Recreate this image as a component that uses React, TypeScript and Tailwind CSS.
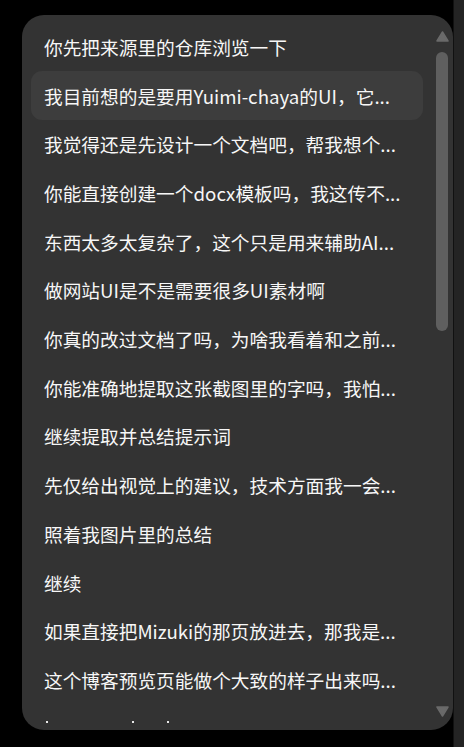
import React from "react";

const items = [
  "你先把来源里的仓库浏览一下",
  "我目前想的是要用Yuimi-chaya的UI，它...",
  "我觉得还是先设计一个文档吧，帮我想个...",
  "你能直接创建一个docx模板吗，我这传不...",
  "东西太多太复杂了，这个只是用来辅助AI...",
  "做网站UI是不是需要很多UI素材啊",
  "你真的改过文档了吗，为啥我看着和之前...",
  "你能准确地提取这张截图里的字吗，我怕...",
  "继续提取并总结提示词",
  "先仅给出视觉上的建议，技术方面我一会...",
  "照着我图片里的总结",
  "继续",
  "如果直接把Mizuki的那页放进去，那我是...",
  "这个博客预览页能做个大致的样子出来吗...",
];

const ArrowUp = () => (
  <svg width="13" height="11" viewBox="0 0 13 11" className="block">
    <path d="M6.5 1 L12 10 L1 10 Z" fill="#6a6a6a" stroke="#6a6a6a" strokeWidth="1.5" strokeLinejoin="round" />
  </svg>
);

const ArrowDown = () => (
  <svg width="13" height="11" viewBox="0 0 13 11" className="block">
    <path d="M1 1 L12 1 L6.5 10 Z" fill="#6a6a6a" stroke="#6a6a6a" strokeWidth="1.5" strokeLinejoin="round" />
  </svg>
);

export default function App() {
  const active = 1;

  return (
    <div
      className="flex h-[747px] w-[464px] bg-black overflow-hidden"
      style={{ fontFamily: '"Noto Sans CJK SC", "Noto Sans", sans-serif' }}
    >
      <div className="flex-1 pl-[22px] pt-[15px]">
        {/* History panel */}
        <div className="flex h-[715px] w-[431px] rounded-[22px] bg-[#333333] overflow-hidden">
          <div className="flex-1 pl-[9px] pt-[7.6px] overflow-hidden">
            {items.map((text, i) => (
              <div
                key={i}
                className={`flex h-[48.7px] items-center rounded-[11px] px-[13px] ${
                  i === active ? "bg-[#3d3d3d]" : ""
                }`}
              >
                <span className="whitespace-nowrap text-[18.7px] leading-[28px] text-[#f7f7f7]">{text}</span>
              </div>
            ))}
            {/* next row, cut off by the panel edge */}
            <div className="flex pl-[15px] pt-[16.6px]">
              <span className="h-[2px] w-[2px] bg-[#e8e8e8]" />
              <span className="ml-[84px] h-[2px] w-[2px] bg-[#e8e8e8]" />
              <span className="ml-[33px] h-[2px] w-[2px] bg-[#e8e8e8]" />
            </div>
          </div>

          {/* Scrollbar */}
          <div className="flex w-[30px] flex-col pl-[13px] pt-[16px] pb-[13px]">
            <ArrowUp />
            <div className="mt-[10px] h-[279px] w-[12px] rounded-full bg-[#5f5f5f]" />
            <div className="flex-1" />
            <ArrowDown />
          </div>
        </div>
      </div>
      <div className="h-full w-[11px] border-l border-[#111111] bg-[#242424]" />
    </div>
  );
}
